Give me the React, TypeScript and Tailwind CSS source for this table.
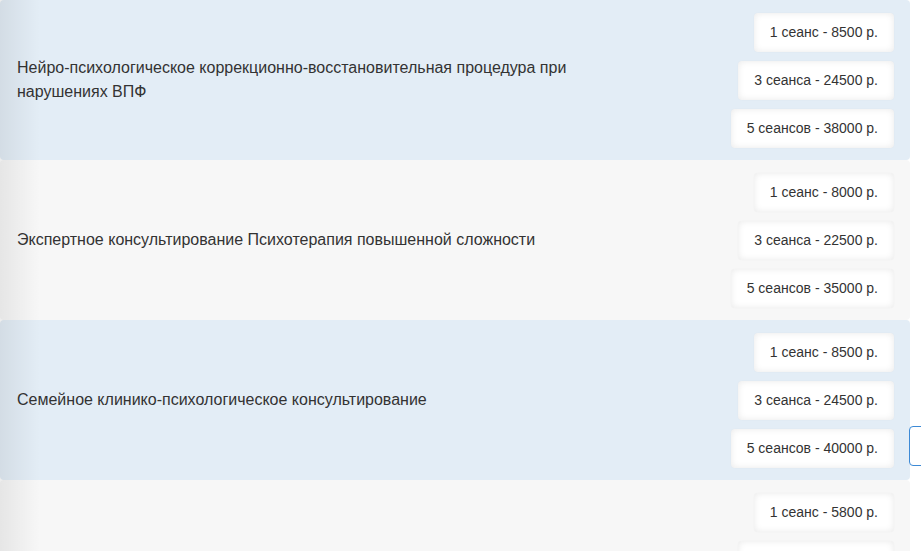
import React from "react";

const rows = [
  {
    title: "Нейро-психологическое коррекционно-восстановительная процедура при нарушениях ВПФ",
    prices: ["1 сеанс - 8500 р.", "3 сеанса - 24500 р.", "5 сеансов - 38000 р."],
    blue: true,
  },
  {
    title: "Экспертное консультирование Психотерапия повышенной сложности",
    prices: ["1 сеанс - 8000 р.", "3 сеанса - 22500 р.", "5 сеансов - 35000 р."],
    blue: false,
  },
  {
    title: "Семейное клинико-психологическое консультирование",
    prices: ["1 сеанс - 8500 р.", "3 сеанса - 24500 р.", "5 сеансов - 40000 р."],
    blue: true,
  },
  {
    title: "",
    prices: ["1 сеанс - 5800 р.", "3 сеанса - 16500 р.", "5 сеансов - 26000 р."],
    blue: false,
  },
];

export default function App() {
  return (
    <div
      className="relative w-[921px] h-[551px] overflow-hidden bg-white text-[#333333]"
      style={{ fontFamily: '"Liberation Sans", Arial, sans-serif' }}
    >
      <div className="flex flex-col w-[910px]">
        {rows.map((r, i) => (
          <div
            key={i}
            className={`flex items-center justify-between h-[160px] pl-[17px] pr-4 rounded-[4px] ${
              r.blue ? "bg-[#e3edf6]" : "bg-[#f7f7f7]"
            }`}
          >
            <div className="w-[590px] text-[16px] leading-6">{r.title}</div>
            <div className="flex flex-col items-end gap-[9px]">
              {r.prices.map((p) => (
                <div
                  key={p}
                  className="h-[39px] px-4 flex items-center bg-white rounded-[4px] text-[14px] shadow-[inset_0_0_7px_rgba(0,0,0,0.09),0_0_2px_rgba(0,0,0,0.03)]"
                >
                  {p}
                </div>
              ))}
            </div>
          </div>
        ))}
      </div>
      <div className="pointer-events-none absolute left-0 top-0 h-full w-[40px] bg-gradient-to-r from-[rgba(0,0,0,0.07)] to-transparent" />
      <div className="absolute left-[909px] top-[426px] w-[30px] h-[40px] rounded-[4px] border border-[#3d8ad6] bg-white" />
    </div>
  );
}
